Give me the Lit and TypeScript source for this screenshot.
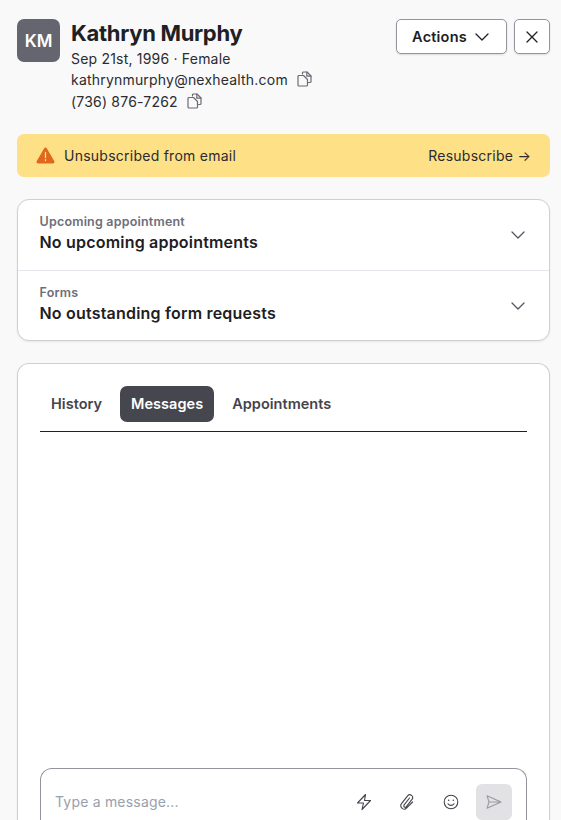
import { LitElement, html, css, svg } from "lit";
import { customElement } from "lit/decorators.js";

const chevron = svg`<path d="M1 1 L7 7 L13 1" fill="none" stroke="currentColor" stroke-width="1.3" stroke-linecap="round" stroke-linejoin="round"/>`;
const copyIcon = html`<svg class="copy" width="15" height="16" viewBox="0 0 15 16" fill="none" stroke="#6b6b73" stroke-width="1.2" stroke-linejoin="round" stroke-linecap="round">
  <path d="M5.5 3 V2 a1 1 0 0 1 1-1 H10 L14 5 V10.5 a1 1 0 0 1-1 1 H11.5"/>
  <path d="M9.8 1 V5.2 H14"/>
  <path d="M2 4.5 H6.5 L10.5 8.5 V14 a1 1 0 0 1-1 1 H2 a1 1 0 0 1-1-1 V5.5 a1 1 0 0 1 1-1 Z"/>
</svg>`;

@customElement("app-root")
export class AppRoot extends LitElement {
  static styles = css`
    :host {
      display: block;
      width: 561px;
      height: 820px;
      overflow: hidden;
      background: #f9f9f9;
      font-family: Inter, "Liberation Sans", sans-serif;
      color: #202024;
      box-sizing: border-box;
    }
    .page { padding: 19px 11px 0 17px; display: flex; flex-direction: column; }
    .header { display: flex; align-items: flex-start; height: 115px; }
    .avatar {
      width: 43px; height: 43px; border-radius: 7px; background: #65656f; color: #fff;
      display: flex; align-items: center; justify-content: center;
      font-size: 17px; font-weight: 600; flex: none;
    }
    .info { margin-left: 11px; flex: 1; min-width: 0; }
    .name { font-size: 22px; font-weight: 650; line-height: 28px; letter-spacing: -0.3px; }
    .lines { display: grid; grid-template-rows: 21px 22px 21px; align-items: start; margin-top: 1px; }
    .line { height: 21px; font-size: 14px; letter-spacing: .2px; line-height: 21px; color: #2b2b30; display: flex; align-items: center; white-space: nowrap; }
    .copy { margin-left: 9px; flex: none; margin-top: -1px; }
    .actions { display: flex; gap: 7px; }
    .btn {
      height: 35px; box-sizing: border-box; background: #fff; border: 1px solid #94949e; border-radius: 5px;
      box-shadow: 0 1px 2px rgba(0,0,0,.12); display: flex; align-items: center; justify-content: center;
      font-size: 14.5px; letter-spacing: .2px; font-weight: 600; color: #202024;
    }
    .btn.act { width: 111px; gap: 8px; padding-right: 2px; }
    .btn.close { width: 36px; }
    .banner {
      height: 43px; background: #fee086; border-radius: 7px; display: flex; align-items: center;
      padding: 0 19px; font-size: 14px; letter-spacing: .25px; color: #2b2b30;
    }
    .banner .msg { margin-left: 9px; flex: 1; }
    .card {
      background: #fff; border: 1px solid #cfcfd4; border-radius: 12px;
      box-shadow: 0 1px 2px rgba(0,0,0,.08); box-sizing: border-box;
    }
    .summary { margin-top: 22px; }
    .row { height: 70px; box-sizing: border-box; padding: 14px 24px 0 21.5px; display: flex; justify-content: space-between; }
    .row + .row { border-top: 1px solid #e6e5ec; }
    .label { font-size: 12.5px; letter-spacing: .2px; font-weight: 600; color: #6e6e78; line-height: 16px; }
    .value { font-size: 16px; letter-spacing: .2px; font-weight: 600; color: #202024; line-height: 21px; margin-top: 2px; }
    .row svg { margin-top: 17px; color: #55555e; }
    .main {
      margin-top: 22px; padding: 22px 22px 0; display: flex; flex-direction: column;
      border-bottom: none; border-radius: 12px 12px 0 0;
    }
    .tabs { display: flex; gap: 7px; height: 46px; box-sizing: border-box; border-bottom: 1px solid #202024; align-items: flex-start; }
    .tab {
      height: 36px; padding: 0 11px 1px; box-sizing: border-box; border-radius: 7px; display: flex; align-items: center;
      font-size: 14.5px; letter-spacing: .03px; font-weight: 600; color: #44444c;
    }
    .tab.on { background: #46464e; color: #fff; }
    .spacer { height: 336px; flex: none; }
    .composer {
      height: 70px; border: 1px solid #94949e; border-bottom: none; border-radius: 12px 12px 0 0;
      display: flex; align-items: flex-start; padding: 15px 14px 0 14px; box-sizing: border-box;
      flex: none;
    }
    .ph { flex: 1; font-size: 14px; letter-spacing: .2px; color: #98a0ac; line-height: 36px; }
    .tool { width: 20px; height: 36px; display: flex; align-items: center; justify-content: center; color: #44444c; margin-right: 23px; }
    .tool.first { margin-left: -1px; margin-right: 24px; }
    .tool.clip { margin-left: -1px; margin-right: 24px; }
    .tool.last { margin-right: 15px; }
    .send { width: 36px; height: 36px; background: #e2e2e5; border-radius: 6px; display: flex; align-items: center; justify-content: center; }
  `;

  render() {
    return html`<div class="page">
      <div class="header">
        <div class="avatar">KM</div>
        <div class="info">
          <div class="name">Kathryn Murphy</div>
          <div class="lines">
            <div class="line">Sep 21st, 1996 · Female</div>
            <div class="line">kathrynmurphy@nexhealth.com${copyIcon}</div>
            <div class="line">(736) 876-7262${copyIcon}</div>
          </div>
        </div>
        <div class="actions">
          <div class="btn act">Actions
            <svg width="14" height="8" viewBox="0 0 14 8">${chevron}</svg>
          </div>
          <div class="btn close">
            <svg width="12" height="12" viewBox="0 0 12 12" fill="none" stroke="#202024" stroke-width="1.3" stroke-linecap="round"><path d="M1 1 L11 11 M11 1 L1 11"/></svg>
          </div>
        </div>
      </div>

      <div class="banner">
        <svg width="19" height="17" viewBox="0 0 19 17"><path d="M8.1 1.4 a1.6 1.6 0 0 1 2.8 0 L18.2 14 a1.6 1.6 0 0 1-1.4 2.5 H2.2 A1.6 1.6 0 0 1 .8 14 Z" fill="#e0681c"/><path d="M9.5 5.5 V10.5 M9.5 12.6 V13.6" stroke="#fee086" stroke-width="1.3" stroke-linecap="round"/></svg>
        <span class="msg">Unsubscribed from email</span>
        <span>Resubscribe →</span>
      </div>

      <div class="card summary">
        <div class="row">
          <div><div class="label">Upcoming appointment</div><div class="value">No upcoming appointments</div></div>
          <svg width="14" height="8" viewBox="0 0 14 8">${chevron}</svg>
        </div>
        <div class="row">
          <div><div class="label">Forms</div><div class="value">No outstanding form requests</div></div>
          <svg width="14" height="8" viewBox="0 0 14 8">${chevron}</svg>
        </div>
      </div>

      <div class="card main">
        <div class="tabs">
          <div class="tab">History</div>
          <div class="tab on">Messages</div>
          <div class="tab">Appointments</div>
        </div>
        <div class="spacer"></div>
        <div class="composer">
          <div class="ph">Type a message...</div>
          <div class="tool first"><svg width="16" height="18" viewBox="0 0 16 18" fill="none" stroke="currentColor" stroke-width="1.1" stroke-linejoin="round"><path d="M9.5 1.5 L1.5 10 H7.5 L6 16.5 L14.5 7.5 H8.5 Z"/></svg></div>
          <div class="tool clip"><svg width="16" height="18" viewBox="0 0 16 18" fill="none" stroke="currentColor" stroke-width="1.1" stroke-linecap="round" stroke-linejoin="round"><path d="M10.5 5 L5 12.2 a1.4 1.4 0 0 0 2.2 1.7 L13 6.3 a2.8 2.8 0 0 0-4.4-3.5 L2.5 10.7 a3.2 3.2 0 0 0 1 4.9 a3.2 3.2 0 0 0 4.2-.7 L13.6 9"/></svg></div>
          <div class="tool last"><svg width="16" height="16" viewBox="0 0 16 16" fill="none" stroke="currentColor" stroke-width="1.1" stroke-linecap="round"><circle cx="8" cy="8" r="6.8"/><path d="M5 9.8 a3.6 3.6 0 0 0 6 0"/><circle cx="5.7" cy="6.2" r=".8" fill="currentColor" stroke="none"/><circle cx="10.3" cy="6.2" r=".8" fill="currentColor" stroke="none"/></svg></div>
          <div class="send"><svg width="16" height="14" viewBox="0 0 16 14" fill="none" stroke="#9a9aa4" stroke-width="1.1" stroke-linejoin="round"><path d="M1 .7 L15 7 L1 13.3 L3 7 Z M3 7 H15"/></svg></div>
        </div>
      </div>
    </div>`;
  }
}
